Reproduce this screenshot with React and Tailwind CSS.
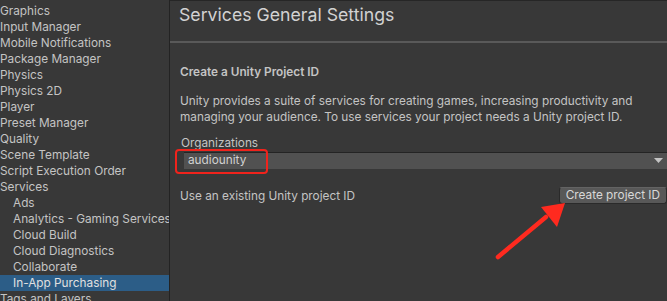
const SIDEBAR_ITEMS = [
  { label: "Graphics" },
  { label: "Input Manager" },
  { label: "Mobile Notifications" },
  { label: "Package Manager" },
  { label: "Physics" },
  { label: "Physics 2D" },
  { label: "Player" },
  { label: "Preset Manager" },
  { label: "Quality" },
  { label: "Scene Template" },
  { label: "Script Execution Order" },
  { label: "Services" },
  { label: "Ads", child: true },
  { label: "Analytics - Gaming Services", child: true },
  { label: "Cloud Build", child: true },
  { label: "Cloud Diagnostics", child: true },
  { label: "Collaborate", child: true },
  { label: "In-App Purchasing", child: true, selected: true },
  { label: "Tags and Layers" },
];

function Sidebar() {
  return (
    <aside className="w-[170px] shrink-0 overflow-hidden border-r border-[#232323] bg-[#383838] pt-[3px]">
      {SIDEBAR_ITEMS.map((item) => (
        <div
          key={item.label}
          className={`h-4 whitespace-nowrap text-[11.8px] leading-4 text-[#c4c4c4] ${
            item.child ? "pl-[13px]" : "pl-0"
          } ${item.selected ? "bg-[#2c5d87] text-[#e0e0e0]" : ""}`}
        >
          {item.label}
        </div>
      ))}
    </aside>
  );
}

function RedArrow() {
  return (
    <svg
      className="pointer-events-none absolute left-0 top-0"
      width="667"
      height="301"
      viewBox="0 0 667 301"
    >
      <path
        d="M498 257 L546 217"
        stroke="#ff2a1f"
        strokeWidth="4.5"
        strokeLinecap="round"
      />
      <polygon points="565,203 541,207 557,227" fill="#ff2a1f" />
    </svg>
  );
}

function SettingsPanel() {
  return (
    <main className="relative flex-1 overflow-hidden border-t border-[#262626] bg-[#383838] text-[#c4c4c4]">
      <div className="h-[40px] pl-[9px] pt-[2px]">
        <h1 className="whitespace-nowrap text-[17.7px] leading-[24px] text-[#d2d2d2]">
          Services General Settings
        </h1>
      </div>
      <div className="h-[2px] bg-[#595959]" />

      <div className="pl-[10px] pt-[21px]">
        <h2 className="text-[11.8px] font-semibold leading-4 text-[#c4c4c4]">
          Create a Unity Project ID
        </h2>
        <p className="mt-[13px] pr-4 text-[11.8px] leading-4">
          Unity provides a suite of services for creating games, increasing
          productivity and managing your audience. To use services your project
          needs a Unity project ID.
        </p>

        <div className="mt-[10px] pl-px text-[11.8px] leading-4">
          Organizations
        </div>
        <div className="relative ml-[4px] mt-px flex h-[17px] items-center justify-between border-t border-[#242424] bg-[#515151] pl-[4px] pr-[4px] text-[11.8px] text-[#d2d2d2]">
          <span>audiounity</span>
          <svg width="9" height="6" viewBox="0 0 9 6">
            <polygon points="0,0 9,0 4.5,5" fill="#c4c4c4" />
          </svg>
          <div className="absolute left-[-9px] top-[-4px] h-[25px] w-[93px] rounded-[4px] border-[2.5px] border-[#f0231c]" />
        </div>

        <div className="mt-[18px] flex items-center justify-between">
          <span className="text-[11.8px] leading-4">
            Use an existing Unity project ID
          </span>
          <button className="h-[17px] rounded-[3px] border border-[#2a2a2a] border-t-[#636363] bg-[#585858] pl-[6px] pr-[6px] text-[11.8px] leading-[15px] text-[#d8d8d8]">
            Create project ID
          </button>
        </div>
      </div>
    </main>
  );
}

export default function App() {
  return (
    <div
      className="relative flex h-[301px] w-[667px] overflow-hidden bg-[#383838]"
      style={{ fontFamily: "Inter, 'Noto Sans', sans-serif" }}
    >
      <Sidebar />
      <SettingsPanel />
      <RedArrow />
    </div>
  );
}
